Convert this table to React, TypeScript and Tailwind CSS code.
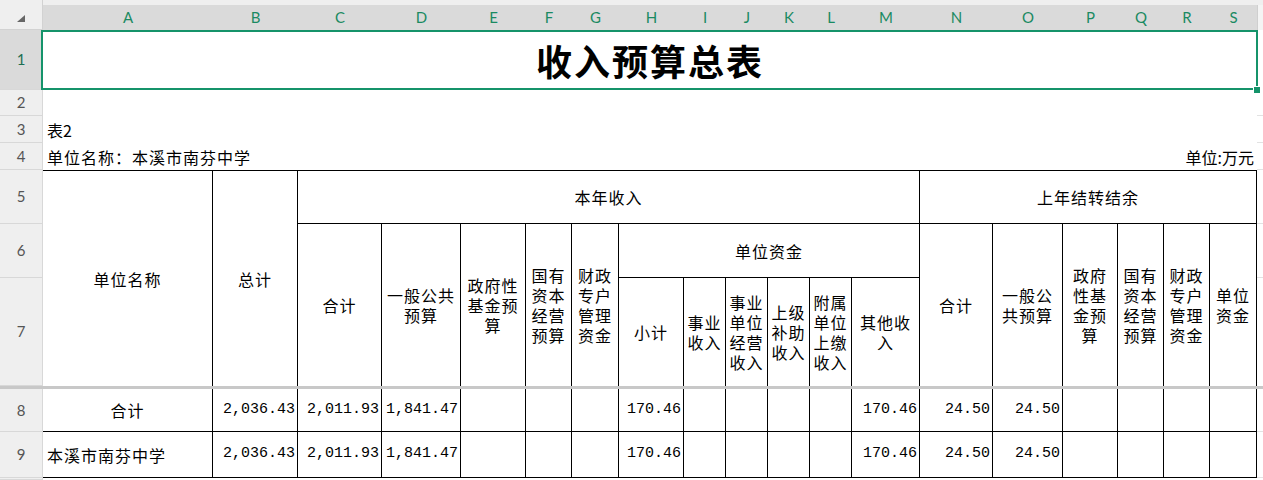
const cjk = "font-['Noto_Sans_CJK_SC',sans-serif]"
const num = "font-['Liberation_Mono',monospace]"

const letters: [string, string][] = [
  ["A", "col-start-2"], ["B", "col-start-3"], ["C", "col-start-4"], ["D", "col-start-5"],
  ["E", "col-start-6"], ["F", "col-start-7"], ["G", "col-start-8"], ["H", "col-start-9"],
  ["I", "col-start-10"], ["J", "col-start-11"], ["K", "col-start-12"], ["L", "col-start-13"],
  ["M", "col-start-14"], ["N", "col-start-15"], ["O", "col-start-16"], ["P", "col-start-17"],
  ["Q", "col-start-18"], ["R", "col-start-19"], ["S", "col-start-20"],
]

const rowHeads: [string, string][] = [
  ["1", "row-start-2"], ["2", "row-start-3"], ["3", "row-start-4"], ["4", "row-start-5"],
  ["5", "row-start-6"], ["6", "row-start-7"], ["7", "row-start-8"], ["8", "row-start-10"],
  ["9", "row-start-11"], ["", "row-start-12"],
]

// header cells of the table
const heads: [string, string][] = [
  ["单位名称", "col-start-2 row-start-6 row-span-3 border-t"],
  ["总计", "col-start-3 row-start-6 row-span-3 border-t"],
  ["本年收入", "col-start-4 col-span-11 row-start-6 border-t border-b"],
  ["上年结转结余", "col-start-15 col-span-6 row-start-6 border-t border-b"],
  ["合计", "col-start-4 row-start-7 row-span-2"],
  ["一般公共\n预算", "col-start-5 row-start-7 row-span-2"],
  ["政府性\n基金预\n算", "col-start-6 row-start-7 row-span-2"],
  ["国有\n资本\n经营\n预算", "col-start-7 row-start-7 row-span-2"],
  ["财政\n专户\n管理\n资金", "col-start-8 row-start-7 row-span-2"],
  ["单位资金", "col-start-9 col-span-6 row-start-7 border-b"],
  ["小计", "col-start-9 row-start-8"],
  ["事业\n收入", "col-start-10 row-start-8"],
  ["事业\n单位\n经营\n收入", "col-start-11 row-start-8"],
  ["上级\n补助\n收入", "col-start-12 row-start-8"],
  ["附属\n单位\n上缴\n收入", "col-start-13 row-start-8"],
  ["其他收\n入", "col-start-14 row-start-8"],
  ["合计", "col-start-15 row-start-7 row-span-2"],
  ["一般公\n共预算", "col-start-16 row-start-7 row-span-2"],
  ["政府\n性基\n金预\n算", "col-start-17 row-start-7 row-span-2"],
  ["国有\n资本\n经营\n预算", "col-start-18 row-start-7 row-span-2"],
  ["财政\n专户\n管理\n资金", "col-start-19 row-start-7 row-span-2"],
  ["单位\n资金", "col-start-20 row-start-7 row-span-2"],
]

const values = ["2,036.43", "2,011.93", "1,841.47", "", "", "", "170.46", "", "", "", "", "170.46", "24.50", "24.50", "", "", "", ""]
const valueCols = [
  "col-start-3", "col-start-4", "col-start-5", "col-start-6", "col-start-7", "col-start-8",
  "col-start-9", "col-start-10", "col-start-11", "col-start-12", "col-start-13", "col-start-14",
  "col-start-15", "col-start-16", "col-start-17", "col-start-18", "col-start-19", "col-start-20",
]

function DataRow({ row, name, center }: { row: string; name: string; center?: boolean }) {
  return (
    <>
      <div className={`col-start-2 ${row} flex items-center border-r border-b border-black px-[4px] text-[16px] tracking-[1px] ${cjk} ${center ? "justify-center" : ""}`}>
        {name}
      </div>
      {values.map((v, i) => (
        <div
          key={i}
          className={`${valueCols[i]} ${row} flex items-center justify-end border-r border-b border-black pr-[2px] text-[15px] ${num}`}
        >
          {v}
        </div>
      ))}
    </>
  )
}

export default function App() {
  return (
    <div className="h-[480px] w-full overflow-hidden bg-white text-black">
      <div className="grid h-full grid-cols-[43px_170px_85px_84px_79px_65px_46px_47px_65px_42px_42px_42px_42px_68px_73px_70px_55px_46px_46px_47px_1fr] grid-rows-[30px_60px_26px_27px_27px_54px_54px_108px_3px_43px_46px_1fr]">
        {/* corner */}
        <div className="col-start-1 row-start-1 relative border-r border-b border-[#d2d2d2] bg-[#efefef]">
          <svg className="absolute left-[17px] top-[15px]" width="9" height="8" viewBox="0 0 9 8">
            <path d="M8 0 L8 7 L0 7 Z" fill="#666" />
          </svg>
        </div>

        {/* column letters */}
        {letters.map(([l, c]) => (
          <div key={l} className={`${c} row-start-1 bg-[#efefef] pt-[5px]`}>
            <div className="flex h-full items-center justify-center bg-[#dadada] font-['Lato',sans-serif] text-[15px] text-[#1a8a62]">
              {l}
            </div>
          </div>
        ))}
        <div className="col-start-21 row-start-1 bg-[#efefef] pt-[5px]">
          <div className="h-full border-l border-[#cfcfcf] bg-[#f4f4f4]" />
        </div>

        {/* row numbers */}
        {rowHeads.map(([n, r]) => (
          <div
            key={r}
            className={`col-start-1 ${r} flex items-center justify-center border-r border-b border-[#d8d8d8] font-['Lato',sans-serif] text-[15px] ${n === "1" ? "bg-[#dadada] text-[#1d6e52]" : "bg-[#efefef] text-[#555]"}`}
          >
            {n}
          </div>
        ))}

        {/* faint gridlines past the table */}
        <div className="col-start-21 row-start-3 border-b border-[#e2e2e2]" />
        <div className="col-start-21 row-start-4 border-b border-[#e2e2e2]" />
        <div className="col-start-21 row-start-5 border-b border-[#e2e2e2]" />
        <div className="col-start-21 row-start-6 border-b border-[#e2e2e2]" />
        <div className="col-start-21 row-start-7 border-b border-[#e2e2e2]" />
        <div className="col-start-21 row-start-10 border-b border-[#e2e2e2]" />
        <div className="col-start-21 row-start-11 border-b border-[#e2e2e2]" />

        {/* title, selected */}
        <div className="col-start-2 col-span-19 row-start-2 relative flex items-center justify-center">
          <span className={`text-[36px] font-semibold tracking-[2px] ${cjk}`}>收入预算总表</span>
          <div className="absolute -left-[2px] -right-[1px] top-0 bottom-0 border-2 border-[#15936a]" />
          <div className="absolute -right-[3px] -bottom-[3px] h-[6px] w-[6px] bg-[#15936a] outline outline-1 outline-white" />
        </div>

        <div className={`col-start-2 row-start-4 flex items-center whitespace-nowrap pl-[4px] text-[16px] ${cjk}`}>表2</div>
        <div className={`col-start-2 col-span-5 row-start-5 flex items-center whitespace-nowrap pl-[4px] text-[16px] tracking-[1px] ${cjk}`}>
          单位名称：本溪市南芬中学
        </div>
        <div className={`col-start-15 col-span-6 row-start-5 flex items-center justify-end whitespace-nowrap pr-[3px] text-[16px] ${cjk}`}>
          单位:万元
        </div>

        {heads.map(([t, c], i) => (
          <div
            key={i}
            className={`${c} flex items-center justify-center whitespace-pre-line border-r border-black text-center text-[16px] leading-[20px] tracking-[1px] ${cjk}`}
          >
            {t}
          </div>
        ))}

        {/* frozen pane line */}
        <div className="col-start-1 col-span-21 row-start-9 bg-[#c8c8c8]" />

        <DataRow row="row-start-10" name="合计" center />
        <DataRow row="row-start-11" name="本溪市南芬中学" />
      </div>
    </div>
  )
}
